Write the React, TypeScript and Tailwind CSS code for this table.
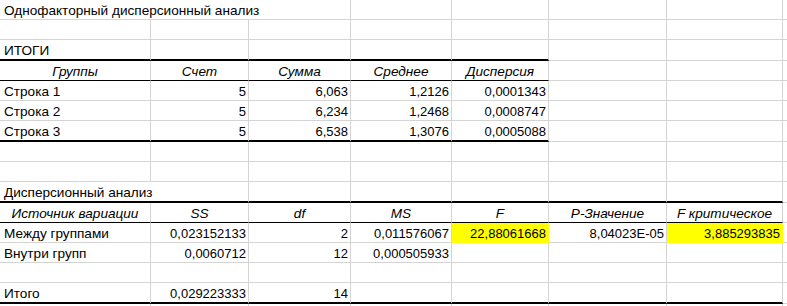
import React from "react";

type Cell = {
  t?: string;
  a?: "l" | "r" | "c";
  i?: boolean;
  span?: 2 | 3;
  y?: boolean;
  b?: "g" | "k" | "K";
};

type Row = { thick?: boolean; cells: Cell[] };

const E: Cell = {};
const empties = (n: number, b: "g" | "k" | "K" = "g"): Cell[] =>
  Array.from({ length: n }, () => ({ b }));

const hdr = (t: string, b: "k" = "k"): Cell => ({ t, a: "c", i: true, b });
const num = (t: string, b?: "g" | "k" | "K"): Cell => ({ t, a: "r", b });
const txt = (t: string, b?: "g" | "k" | "K"): Cell => ({ t, a: "l", b });

const rows: Row[] = [
  { cells: [{ t: "Однофакторный дисперсионный анализ", a: "l", span: 3 }, ...empties(5)] },
  { cells: empties(8) },
  { thick: true, cells: [txt("ИТОГИ", "K"), ...empties(4, "K"), ...empties(3)] },
  {
    cells: [
      hdr("Группы"),
      hdr("Счет"),
      hdr("Сумма"),
      hdr("Среднее"),
      hdr("Дисперсия"),
      ...empties(3),
    ],
  },
  {
    cells: [txt("Строка 1"), num("5"), num("6,063"), num("1,2126"), num("0,0001343"), ...empties(3)],
  },
  {
    cells: [txt("Строка 2"), num("5"), num("6,234"), num("1,2468"), num("0,0008747"), ...empties(3)],
  },
  {
    thick: true,
    cells: [
      txt("Строка 3", "K"),
      num("5", "K"),
      num("6,538", "K"),
      num("1,3076", "K"),
      num("0,0005088", "K"),
      ...empties(3),
    ],
  },
  { cells: empties(8) },
  { cells: empties(8) },
  {
    thick: true,
    cells: [{ t: "Дисперсионный анализ", a: "l", span: 2, b: "K" }, ...empties(5, "K"), E],
  },
  {
    cells: [
      hdr("Источник вариации"),
      hdr("SS"),
      hdr("df"),
      hdr("MS"),
      hdr("F"),
      hdr("P-Значение"),
      hdr("F критическое"),
      E,
    ],
  },
  {
    cells: [
      txt("Между группами"),
      num("0,023152133"),
      num("2"),
      num("0,011576067"),
      { t: "22,88061668", a: "r", y: true },
      num("8,04023E-05"),
      { t: "3,885293835", a: "r", y: true },
      E,
    ],
  },
  {
    cells: [txt("Внутри групп"), num("0,0060712"), num("12"), num("0,000505933"), ...empties(4)],
  },
  { cells: empties(8) },
  {
    thick: true,
    cells: [txt("Итого", "K"), num("0,029223333", "K"), num("14", "K"), ...empties(4, "K"), E],
  },
  { cells: empties(8) },
];

function CellView({ c, thick }: { c: Cell; thick?: boolean }) {
  const b = c.b ?? "g";
  const h = thick ? "h-[21px]" : "h-[20px]";
  let bottom = "border-b border-b-[#d4d4d4]";
  if (b === "k") bottom = "border-b border-b-black";
  if (b === "K") bottom = "border-b-2 border-b-black";
  let right = "border-r border-r-[#d4d4d4]";
  let bg = "";
  if (c.y) {
    bottom = "border-b border-b-[#ffff00]";
    right = "border-r border-r-[#ffff00]";
    bg = "bg-[#ffff00]";
  }
  let align = "justify-start pl-[4px]";
  if (c.a === "r") align = "justify-end pr-[2px]";
  if (c.a === "c") align = "justify-center";
  let span = "";
  if (c.span === 2) span = "col-span-2";
  if (c.span === 3) span = "col-span-3";
  const size = c.a === "r" ? "text-[13px]" : "text-[13.6px]";
  return (
    <div
      className={`${h} ${bottom} ${right} ${bg} ${align} ${span} ${size} flex items-end pb-[1px] whitespace-nowrap overflow-visible leading-[15px] ${
        c.i ? "italic" : ""
      }`}
    >
      {c.t ?? ""}
    </div>
  );
}

export default function App() {
  return (
    <div
      className="w-[787px] h-[306px] overflow-hidden bg-white text-black text-[13px]"
      style={{ fontFamily: "'Liberation Sans', Arial, sans-serif" }}
    >
      <div className="grid grid-cols-[151px_98px_102px_101px_97px_118px_116px_1fr]">
        {rows.map((r, ri) => (
          <React.Fragment key={ri}>
            {r.cells.map((c, ci) => (
              <CellView key={ci} c={c} thick={r.thick} />
            ))}
          </React.Fragment>
        ))}
      </div>
    </div>
  );
}
